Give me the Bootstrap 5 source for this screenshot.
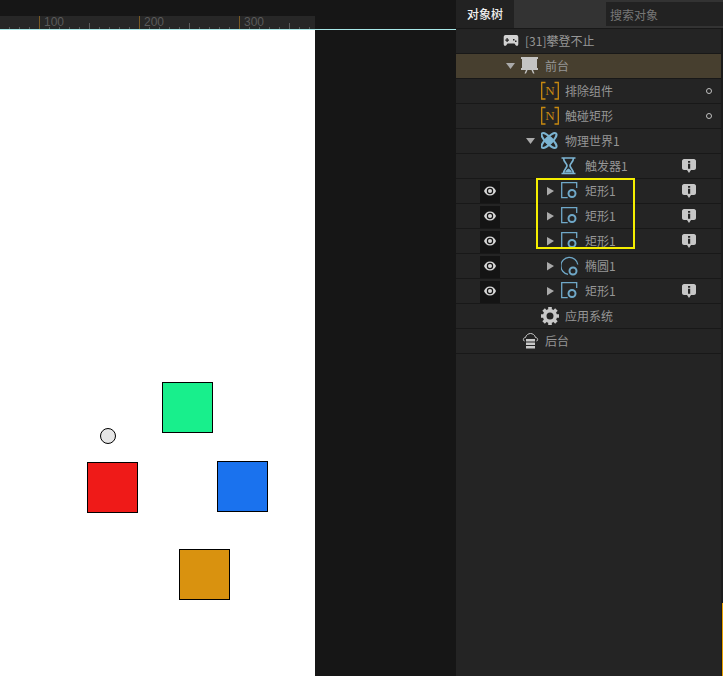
<!DOCTYPE html>
<html lang="zh">
<head>
  <meta charset="UTF-8" />
  <title>对象树</title>
  <link href="https://cdn.jsdelivr.net/npm/bootstrap@5.3.3/dist/css/bootstrap.min.css" rel="stylesheet">
  <style>
    html, body { height: 676px; overflow: hidden; }
    body { background: #161616; font-family: "Noto Sans CJK SC", "Liberation Sans", sans-serif; font-size: 12px; }

    /* left side: ruler and canvas */
    .stage { width: 456px; height: 676px; background: #161616; }
    .stage-top { height: 16px; }
    .ruler-line { height: 14px; border-bottom: 1px solid #a8e8e8; }
    .ruler {
      width: 315px; height: 13px; background-color: #272727;
      background-image:
        repeating-linear-gradient(90deg, transparent 0 39px, #7a5a22 39px 40px, transparent 40px 100px),
        repeating-linear-gradient(90deg, transparent 0 89px, #5c5c5c 89px 90px, transparent 90px 100px),
        repeating-linear-gradient(90deg, transparent 0 9px, #5c5c5c 9px 10px);
      background-size: 100px 13px, 100px 6px, 10px 2px;
      background-position: 0 0, 0 100%, 0 100%;
      background-repeat: repeat-x;
    }
    .ruler-num { width: 100px; flex: none; padding-left: 44px; color: #5a5a5a; font-family: "Liberation Sans", sans-serif; font-size: 12px; line-height: 13px; }
    .canvas-area { width: 315px; height: 646px; background: #fff; }
    .shape { position: absolute; width: 51px; height: 51px; border: 1px solid #000; }
    .shape-green { left: 162px; top: 352px; background: #18ef8c; }
    .shape-red { left: 87px; top: 432px; background: #ef1a18; }
    .shape-blue { left: 217px; top: 431px; background: #1a72ee; }
    .shape-orange { left: 179px; top: 519px; background: #d9920f; }
    .shape-ball { left: 100px; top: 398px; width: 16px; height: 16px; border-radius: 50%; background: #e6e6e6; }

    /* right side: object tree */
    .tree-panel { width: 267px; height: 676px; background: #242424; border-right: 2px solid #1b1b1b; }
    .tree-head { height: 29px; background: #333; border-bottom: 1px solid #181818; margin-right: -2px; }
    .tree-tab { width: 58px; background: #222; color: #f0f0f0; font-weight: 500; padding-left: 11px; line-height: 28px; }
    .tree-search.form-control { width: 117px; height: 24px; margin-top: 2px; padding: 0 4px; background: #222; border: 0; border-radius: 0; color: #999; font-size: 12px; box-shadow: none; }
    .tree-search::placeholder { color: #777; opacity: 1; }
    .tree-row { height: 25px; border-bottom: 1px solid #181818; color: #969696; line-height: 24px; }
    .tree-row.is-active { background: #473f2f; }
    .eye-slot { width: 20px; height: 22px; margin-left: 24px; margin-right: 1px; flex: none; align-self: flex-end; background: #141414; }
    .eye-slot svg { display: block; }
    .eye-none { width: 20px; margin-left: 24px; margin-right: 1px; flex: none; }
    .lvl-1 { width: 20px; flex: none; }
    .lvl-2 { width: 40px; flex: none; }
    .arrow-slot, .icon-slot { width: 20px; height: 24px; flex: none; }
    .row-label { margin-left: 4px; white-space: nowrap; flex-grow: 1; }
    .side-info { flex: none; margin-right: 25px; }
    .side-dot { flex: none; margin-right: 8px; }
    .tree-mark { position: absolute; left: 80px; top: 178px; width: 99px; height: 71px; border: 2px solid #f5ee00; pointer-events: none; }
    .scroll-mark { position: absolute; right: -2px; top: 603px; bottom: 0; width: 1px; background: #e8a000; }
  </style>
</head>
<body>
  <svg width="0" height="0" class="position-absolute">
    <symbol id="i-pad" viewBox="0 0 20 24"><path fill="#d2d2d2" fill-rule="evenodd" d="M4.500 6h11c1.300 0 1.800 1 1.800 2.500v6.500c0 2-1.800 2.500-2.800 1l-1-1.500H6.500l-1 1.500c-1 1.500-2.800 1-2.800-1V8.500C2.700 7 3.200 6 4.500 6zM5.500 9v1.500H4.300v1.200h1.200V13h1.200v-1.300H8v-1.200H6.700V9zM12 10v1.500h1.500V10zM14 11.500V13h1.500v-1.500z"/></symbol>
    <symbol id="i-easel" viewBox="0 0 20 24"><path fill="#c4c4c4" d="M0 3h17v2h-1v9h1v2h-5l1.500 3.500H12L10.500 16h-4L5 19.500H3.500L5 16H0v-2h1V5H0z"/></symbol>
    <symbol id="i-node" viewBox="0 0 20 24"><path fill="none" stroke="#c98a10" stroke-width="1.300" d="M4.500 3.500H.7v16.500h3.800M13.500 3.500h3.800v16.500h-3.800"/></symbol>
    <symbol id="i-atom" viewBox="0 0 20 24"><g fill="none" stroke="#7cb4d2" stroke-width="2"><ellipse cx="8" cy="11.500" rx="10" ry="3.200" transform="rotate(45 8 11.500)"/><ellipse cx="8" cy="11.500" rx="10" ry="3.200" transform="rotate(-45 8 11.500)"/></g><circle cx="8" cy="11.500" r="3.600" fill="#7cb4d2"/></symbol>
    <symbol id="i-glass" viewBox="0 0 20 24"><path fill="none" stroke="#7cb4d2" stroke-width="1.700" d="M.5 4h14M.5 19.500h14M2.500 4c0 4 3.500 5.500 3.500 7.700s-3.500 3.800-3.500 7.800M12.500 4c0 4-3.500 5.500-3.500 7.700s3.500 3.800 3.500 7.800"/><path fill="#7cb4d2" d="M4 18.500c.5-2 2.500-3.500 3.500-4 1 .5 3 2 3.500 4z"/></symbol>
    <symbol id="i-rect" viewBox="0 0 20 24"><path fill="none" stroke="#6fa8c8" stroke-width="1.300" d="M15.700 9V3.700H.7v15h6"/><circle cx="11" cy="14.500" r="3.500" fill="none" stroke="#6fa8c8" stroke-width="2"/></symbol>
    <symbol id="i-oval" viewBox="0 0 20 24"><path fill="none" stroke="#6fa8c8" stroke-width="1.300" d="M7 20.300a8.500 8.500 0 1 1 9.800-9.800"/><circle cx="12" cy="17" r="3.500" fill="none" stroke="#6fa8c8" stroke-width="2"/></symbol>
    <symbol id="i-gear" viewBox="0 0 20 24"><circle cx="9" cy="12" r="5.300" fill="none" stroke="#c8c8c8" stroke-width="3.600"/><path fill="none" stroke="#c8c8c8" stroke-width="3.600" d="M9 3v3M9 18v3M0 12h3M15 12h3M2.600 5.600l2.100 2.100M13.300 16.300l2.100 2.100M2.600 18.400l2.100-2.100M13.300 7.700l2.100-2.100"/></symbol>
    <symbol id="i-back" viewBox="0 0 20 24"><path fill="none" stroke="#c8c8c8" stroke-width="1" d="M3.500 12H3C1.500 10 3 8.500 4.500 8.500 5 6 7.500 4.500 9.500 4.500s4.500 1.500 5 4c1.500 0 3 1.500 1.500 3.500h-.5"/><path fill="#c8c8c8" d="M5 10h9v2.500H5zM5 13.500h9V16H5zM5 17h9v2.500H5z"/></symbol>
    <symbol id="i-eye" viewBox="0 0 20 22"><path fill="#d6d6d6" fill-rule="evenodd" d="M10 5.500c3 0 5 2 6 4.500-1 2.500-3 4.500-6 4.500s-5-2-6-4.500c1-2.500 3-4.500 6-4.500zm0 1.300a3.200 3.200 0 1 0 0 6.400 3.200 3.200 0 0 0 0-6.400z"/><circle cx="10" cy="10" r="2" fill="#d6d6d6"/></symbol>
    <symbol id="i-info" viewBox="0 0 14 16"><path fill="#c6c6c6" d="M2 1h10c1 0 2 1 2 2v7c0 1-1 2-2 2H9l-2 3-2-3H2c-1 0-2-1-2-2V3c0-1 1-2 2-2z"/><path fill="#242424" d="M6 3h2.200v1.800H6zM6 5.800h2.200v5H6z"/></symbol>
  </svg>

  <div class="d-flex">
    <div class="stage flex-shrink-0">
      <div class="stage-top"></div>
      <div class="ruler-line">
        <div class="ruler d-flex overflow-hidden">
          <span class="ruler-num">100</span><span class="ruler-num">200</span><span class="ruler-num">300</span>
        </div>
      </div>
      <div class="canvas-area position-relative">
        <div class="shape shape-green"></div>
        <div class="shape shape-ball"></div>
        <div class="shape shape-red"></div>
        <div class="shape shape-blue"></div>
        <div class="shape shape-orange"></div>
      </div>
    </div>

    <div class="tree-panel position-relative flex-shrink-0">
      <div class="tree-head d-flex justify-content-between">
        <div class="tree-tab">对象树</div>
        <input class="form-control tree-search" placeholder="搜索对象">
      </div>
      <div id="tree"></div>
      <div class="tree-mark"></div>
      <div class="scroll-mark"></div>
    </div>
  </div>

  <script>
    // lvl = indent, arrow: d(own) r(ight) or none, side: i(nfo) o(circle)
    const rows = [
      { lvl: 0, icon: 'pad', text: '[31]攀登不止', noArrow: true },
      { lvl: 0, arrow: 'd', icon: 'easel', text: '前台', active: true },
      { lvl: 1, icon: 'node', text: '排除组件', side: 'o' },
      { lvl: 1, icon: 'node', text: '触碰矩形', side: 'o' },
      { lvl: 1, arrow: 'd', icon: 'atom', text: '物理世界1' },
      { lvl: 2, icon: 'glass', text: '触发器1', side: 'i' },
      { lvl: 2, arrow: 'r', icon: 'rect', text: '矩形1', side: 'i', eye: true },
      { lvl: 2, arrow: 'r', icon: 'rect', text: '矩形1', side: 'i', eye: true },
      { lvl: 2, arrow: 'r', icon: 'rect', text: '矩形1', side: 'i', eye: true },
      { lvl: 2, arrow: 'r', icon: 'oval', text: '椭圆1', eye: true },
      { lvl: 2, arrow: 'r', icon: 'rect', text: '矩形1', side: 'i', eye: true },
      { lvl: 1, icon: 'gear', text: '应用系统' },
      { lvl: 0, icon: 'back', text: '后台' }
    ];

    const arrows = {
      d: '<svg class="arrow-slot" viewBox="0 0 20 24"><path fill="#aaa" d="M5 9h9l-4.500 6z"/></svg>',
      r: '<svg class="arrow-slot" viewBox="0 0 20 24"><path fill="#aaa" d="M6 8l7 4-7 4.500z"/></svg>'
    };
    const sides = {
      i: '<svg width="14" height="16" class="side-info"><use href="#i-info"/></svg>',
      o: '<svg width="8" height="8" class="side-dot"><circle cx="4" cy="4" r="2.500" fill="none" stroke="#c0c0c0"/></svg>'
    };
    // the N in the node icon stays real text
    const letter = '<text x="9" y="16" text-anchor="middle" fill="#c98a10" font-family="Liberation Serif, serif" font-size="13">N</text>';

    document.getElementById('tree').innerHTML = rows.map(r => `
      <div class="tree-row d-flex align-items-center${r.active ? ' is-active' : ''}">
        ${r.eye ? '<div class="eye-slot"><svg width="20" height="22"><use href="#i-eye"/></svg></div>' : '<div class="eye-none"></div>'}
        ${r.lvl ? `<div class="lvl-${r.lvl}"></div>` : ''}
        ${r.noArrow ? '' : (r.arrow ? arrows[r.arrow] : '<div class="arrow-slot"></div>')}
        <svg class="icon-slot"><use href="#i-${r.icon}"/>${r.icon === 'node' ? letter : ''}</svg>
        <span class="row-label">${r.text}</span>
        ${r.side ? sides[r.side] : ''}
      </div>`).join('');
  </script>
  <script src="https://cdn.jsdelivr.net/npm/bootstrap@5.3.3/dist/js/bootstrap.bundle.min.js"></script>
</body>
</html>
